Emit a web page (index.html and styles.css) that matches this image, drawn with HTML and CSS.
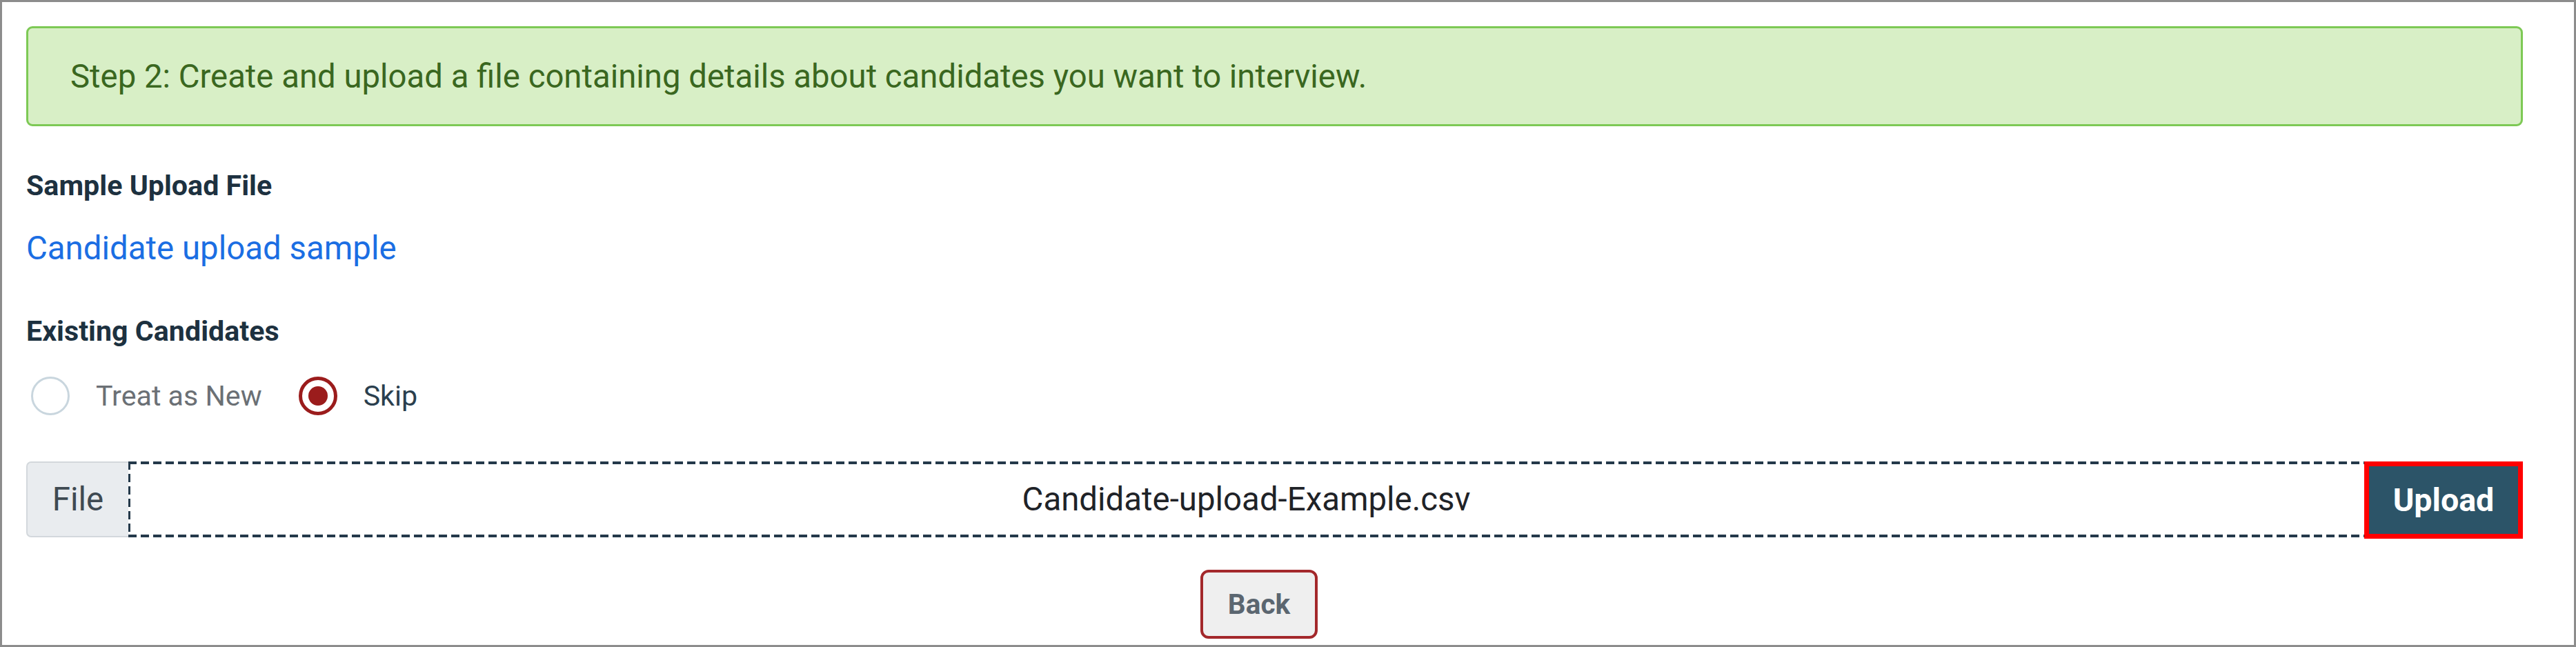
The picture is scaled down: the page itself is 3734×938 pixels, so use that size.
FILE: index.html
```html
<!DOCTYPE html>
<html lang="en">
<head>
<meta charset="utf-8">
<title>Candidate Upload</title>
<link rel="stylesheet" href="styles.css">
</head>
<body>
<div class="frame">
  <div class="alert">Step 2: Create and upload a file containing details about candidates you want to interview.</div>

  <div class="section-label label-sample">Sample Upload File</div>
  <a class="sample-link" href="#">Candidate upload sample</a>

  <div class="section-label label-existing">Existing Candidates</div>
  <div class="radio-row">
    <label class="radio-option">
      <span class="radio"></span>
      <span class="radio-text muted">Treat as New</span>
    </label>
    <label class="radio-option">
      <span class="radio checked"><span class="dot"></span></span>
      <span class="radio-text">Skip</span>
    </label>
  </div>

  <div class="file-row">
    <div class="file-label">File</div>
    <div class="file-input">Candidate-upload-Example.csv</div>
    <button class="upload-btn">Upload</button>
  </div>

  <div class="footer">
    <button class="back-btn">Back</button>
  </div>
</div>
</body>
</html>
```

FILE: styles.css
```css
* { box-sizing: border-box; }

html, body {
  margin: 0;
  padding: 0;
  background: #ffffff;
}

body {
  font-family: Roboto, "Liberation Sans", Arial, sans-serif;
  width: 3734px;
  height: 938px;
  overflow: hidden;
}

.frame {
  width: 3734px;
  height: 938px;
  border: 3px solid #8c8c8c;
  padding: 35px 74px 0 35px;
  display: flex;
  flex-direction: column;
  overflow: hidden;
}

.alert {
  height: 145px;
  flex: none;
  display: flex;
  align-items: center;
  padding-left: 61px;
  background: #d8efc6;
  border: 3px solid #7dc955;
  border-radius: 9px;
  color: #3a6720;
  font-size: 47.3px;
  line-height: 56px;
}

.section-label {
  font-size: 41.2px;
  line-height: 48px;
  font-weight: 700;
  color: #1d3140;
}

.label-sample { margin-top: 62px; }
.label-existing { margin-top: 68px; }

.sample-link {
  align-self: flex-start;
  margin-top: 39px;
  font-size: 47.4px;
  line-height: 56px;
  color: #1b6ee3;
  text-decoration: none;
}

.radio-row {
  margin-top: 42px;
  height: 56px;
  display: flex;
  align-items: center;
  gap: 53px;
  padding-left: 7px;
}

.radio-option {
  display: flex;
  align-items: center;
  gap: 38px;
}

.radio {
  width: 56px;
  height: 56px;
  border-radius: 50%;
  border: 3px solid #c9d6de;
  background: #ffffff;
  display: flex;
  align-items: center;
  justify-content: center;
}

.radio.checked {
  border: 5px solid #9b1c1c;
}

.radio .dot {
  width: 28px;
  height: 28px;
  border-radius: 50%;
  background: #9b1c1c;
}

.radio-text {
  font-size: 41.2px;
  line-height: 48px;
  color: #2b3f4e;
}

.radio-text.muted { color: #6b7075; }

.file-row {
  margin-top: 67px;
  display: flex;
  align-items: flex-start;
}

.file-label {
  width: 148px;
  height: 110px;
  flex: none;
  display: flex;
  align-items: center;
  justify-content: center;
  background: #e9ecef;
  border: 2px solid #d3d8dc;
  border-right: none;
  border-radius: 7px 0 0 7px;
  color: #3f4a52;
  font-size: 47.4px;
}

.file-input {
  flex: 1;
  height: 110px;
  display: flex;
  align-items: center;
  justify-content: center;
  background:
    repeating-linear-gradient(90deg, #24394a 0 12px, transparent 12px 18px) left top / 100% 4px no-repeat,
    repeating-linear-gradient(90deg, #24394a 0 12px, transparent 12px 18px) left bottom / 100% 4px no-repeat,
    repeating-linear-gradient(180deg, #24394a 0 12px, transparent 12px 18px) left top / 3px 100% no-repeat,
    #ffffff;
  color: #1f2328;
  font-size: 47.4px;
  line-height: 56px;
}

.upload-btn {
  width: 230px;
  height: 112px;
  flex: none;
  margin: 0;
  background: #2c5468;
  border: 7px solid #ff0000;
  color: #ffffff;
  font-family: Roboto, "Liberation Sans", Arial, sans-serif;
  font-size: 46.6px;
  font-weight: 700;
  padding: 0;
}

.footer {
  margin-top: 45px;
  display: flex;
  justify-content: center;
  padding-right: 45px;
}

.back-btn {
  width: 170px;
  height: 100px;
  background: #efefef;
  border: 4px solid #a3282b;
  border-radius: 12px;
  color: #5b6670;
  font-family: Roboto, "Liberation Sans", Arial, sans-serif;
  font-size: 40.5px;
  font-weight: 700;
  padding: 0;
}
```
